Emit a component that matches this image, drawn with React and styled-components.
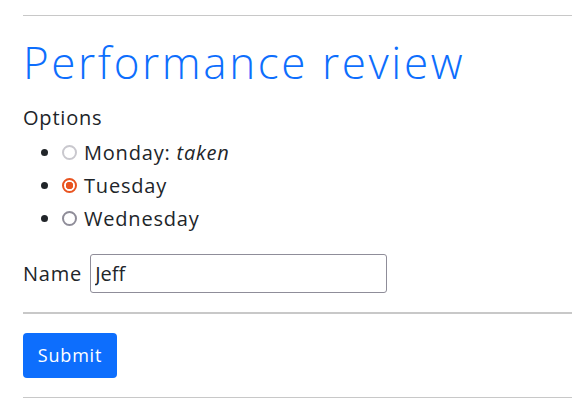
import React from 'react';
import styled, { createGlobalStyle } from 'styled-components';

const GlobalStyle = createGlobalStyle`
  html, body {
    margin: 0;
    background: #fff;
  }
  body {
    font-family: "Open Sans", Lato, "Liberation Sans", sans-serif;
    color: #212529;
    font-size: 20px;
    letter-spacing: 0.8px;
  }
`;

const Page = styled.form`
  padding: 15px 0 0 23px;
  overflow: hidden;
`;

const Rule = styled.hr`
  margin: 0;
  border: 0;
  border-top: ${(p) => p.$thick ? 2 : 1}px solid #c8c8c8;
`;

const Title = styled.h1`
  margin: 20px 0 14px;
  font-size: 44px;
  font-weight: 300;
  line-height: 1.2;
  letter-spacing: 2.6px;
  color: #0d6efd;
`;

const Fieldset = styled.div``;

const Legend = styled.div`
  line-height: 30px;
`;

const Choices = styled.ul`
  margin: 3px 0 0;
  padding-left: 39px;
`;

const Choice = styled.li`
  line-height: 33px;
`;

const ChoiceLabel = styled.label`
  display: inline-flex;
  align-items: center;
  gap: 7px;
  color: #212529;
`;

const Radio = styled.input.attrs({ type: 'radio' })`
  appearance: none;
  margin: 0;
  width: 15px;
  height: 15px;
  border-radius: 50%;
  border: 2px solid #8f8d99;
  background: #fff;
  box-sizing: border-box;

  &:disabled {
    border-color: #c9c8ce;
  }
  &:checked {
    border-color: #e95420;
    background: radial-gradient(circle, #e95420 0 3.5px, #fff 4px);
  }
`;

const Note = styled.em``;

const NameRow = styled.label`
  display: flex;
  align-items: center;
  gap: 8px;
  margin: 19px 0 19px;
`;

const TextInput = styled.input`
  width: 297px;
  height: 39px;
  box-sizing: border-box;
  padding: 0 4px;
  border: 1px solid #8f8d99;
  border-radius: 3px;
  font: inherit;
  color: #212529;
  font-weight: 500;
`;

const SubmitButton = styled.button`
  display: block;
  margin: 19px 0;
  width: 94px;
  height: 45px;
  border: 0;
  border-radius: 4px;
  background: #0d6efd;
  color: #fff;
  font-family: inherit;
  font-size: 18px;
  letter-spacing: 0.8px;
`;

const options = [
  { day: 'Monday', note: 'taken', disabled: true },
  { day: 'Tuesday', checked: true },
  { day: 'Wednesday' },
];

const App = () => {
  return (
    <Page onSubmit={(e) => e.preventDefault()}>
      <GlobalStyle />
      <Rule />
      <Title>Performance review</Title>
      <Fieldset>
        <Legend>Options</Legend>
        <Choices>
          {options.map((o) => (
            <Choice key={o.day}>
              <ChoiceLabel>
                <Radio name="day" disabled={o.disabled} defaultChecked={o.checked} />
                <span>
                  {o.day}
                  {o.note && <>: <Note>{o.note}</Note></>}
                </span>
              </ChoiceLabel>
            </Choice>
          ))}
        </Choices>
      </Fieldset>
      <NameRow>
        Name
        <TextInput defaultValue="Jeff" />
      </NameRow>
      <Rule $thick />
      <SubmitButton type="submit">Submit</SubmitButton>
      <Rule />
    </Page>
  );
};

export default App;
